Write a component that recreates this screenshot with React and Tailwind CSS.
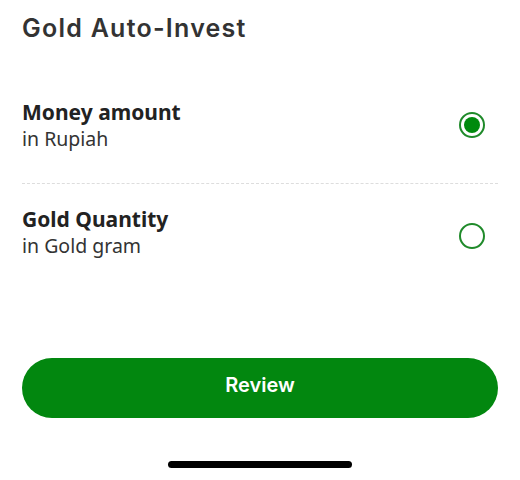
import React, { useState } from 'react';

const opciones = [
  { id: 'money', titulo: 'Money amount', sub: 'in Rupiah' },
  { id: 'gold', titulo: 'Gold Quantity', sub: 'in Gold gram' },
];

const Radio = ({ checked }) => (
  <div className="w-[26px] h-[26px] rounded-full border-2 border-[#1f8a2a] flex items-center justify-center">
    {checked && <div className="w-[16px] h-[16px] rounded-full bg-[#008a0e]" />}
  </div>
);

export default function App() {
  const [sel, setSel] = useState('money');

  return (
    <div className="w-[520px] h-[480px] bg-white flex flex-col font-['Noto_Sans',sans-serif] text-[#222]">
      <h1 className="px-[22px] pt-[12px] text-[25px] leading-[32px] font-semibold tracking-[0.05em] text-[#333] font-['Inter',sans-serif]">
        Gold Auto-Invest
      </h1>

      <div className="mt-[54px] px-[22px]">
        {opciones.map((op, i) => (
          <div key={op.id}>
            {i > 0 && <div className="border-t border-dashed border-[#ddd]" />}
            <button
              onClick={() => setSel(op.id)}
              className={`w-full flex items-center justify-between text-left ${i === 0 ? 'pb-[31px]' : 'pt-[21px]'}`}
            >
              <div>
                <div className="text-[21px] leading-[28px] font-bold">{op.titulo}</div>
                <div className="text-[19.5px] leading-[26px] text-[#333]">{op.sub}</div>
              </div>
              <div className={`mr-[13px] ${i > 0 ? 'mt-[8px]' : ''}`}>
                <Radio checked={sel === op.id} />
              </div>
            </button>
          </div>
        ))}
      </div>

      <div className="mt-auto px-[22px]">
        <button className="w-full h-[60px] rounded-full bg-[#02870f] text-white text-[20px] font-semibold font-['Inter',sans-serif] pb-[6px]">
          Review
        </button>
        <div className="flex justify-center pt-[43px] pb-[12px]">
          <div className="w-[184px] h-[7px] rounded-full bg-black" />
        </div>
      </div>
    </div>
  );
}
